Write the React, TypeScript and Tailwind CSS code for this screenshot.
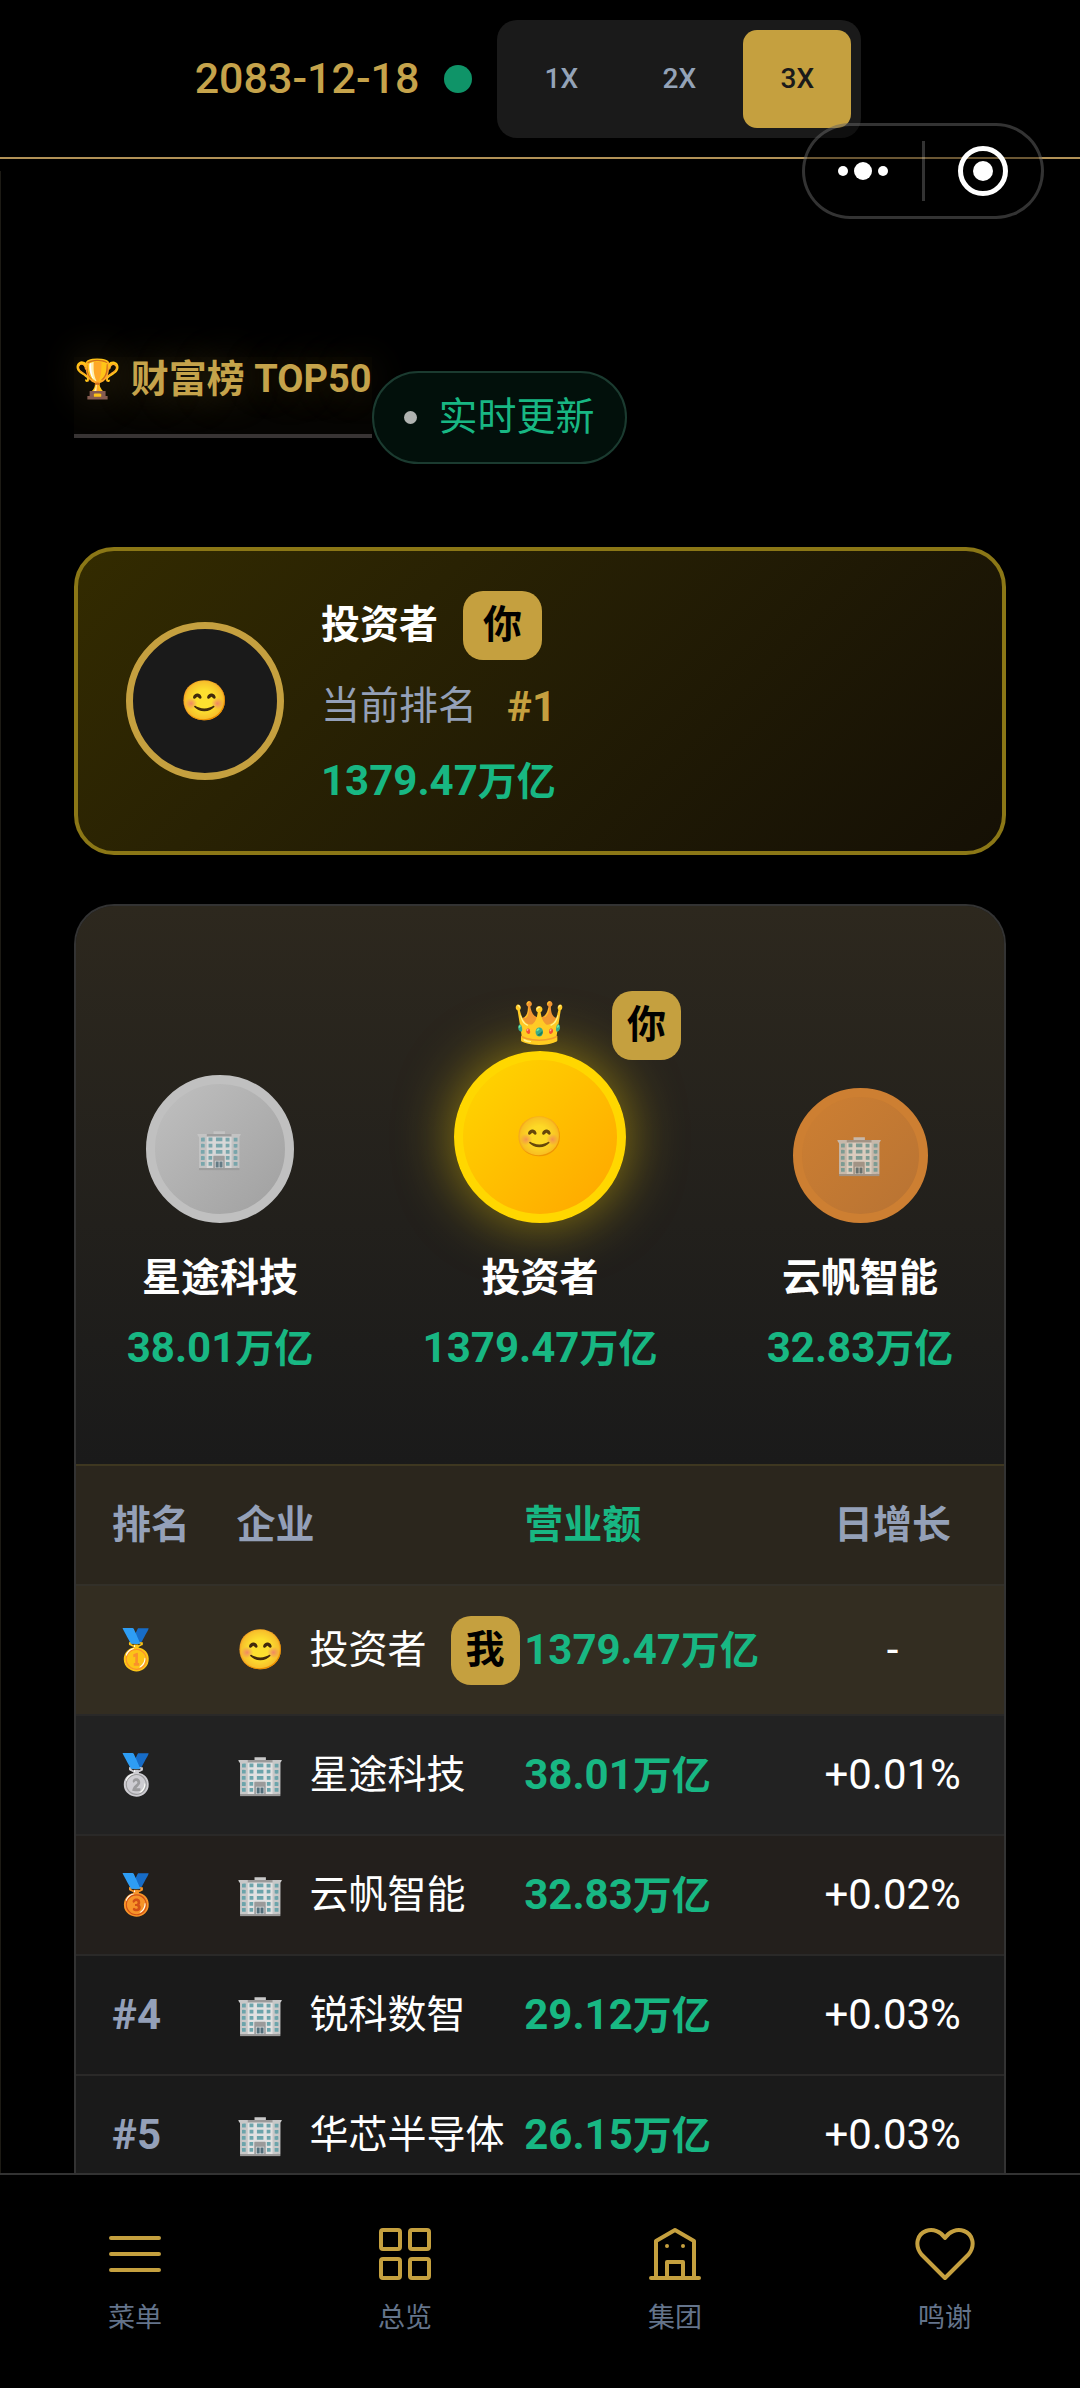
import { useState } from 'react';

interface Amount {
  value: string;
  unit: string;
}

interface Company {
  rank: string;
  icon: string;
  name: string;
  revenue: Amount;
  growth: string;
  isMe?: boolean;
}

interface PodiumPlace {
  icon: string;
  name: string;
  revenue: Amount;
  avatarClass: string;
  isFirst?: boolean;
}

const COMPANIES: Company[] = [
  { rank: '🥇', icon: '😊', name: '投资者', revenue: { value: '1379.47', unit: '万亿' }, growth: '-', isMe: true },
  { rank: '🥈', icon: '🏢', name: '星途科技', revenue: { value: '38.01', unit: '万亿' }, growth: '+0.01%' },
  { rank: '🥉', icon: '🏢', name: '云帆智能', revenue: { value: '32.83', unit: '万亿' }, growth: '+0.02%' },
  { rank: '#4', icon: '🏢', name: '锐科数智', revenue: { value: '29.12', unit: '万亿' }, growth: '+0.03%' },
  { rank: '#5', icon: '🏢', name: '华芯半导体', revenue: { value: '26.15', unit: '万亿' }, growth: '+0.03%' },
];

const ROW_BG = ['bg-[#332d21]', 'bg-[#222222]', 'bg-[#231f1c]', '', ''];

const PODIUM: PodiumPlace[] = [
  {
    icon: '🏢',
    name: '星途科技',
    revenue: { value: '38.01', unit: '万亿' },
    avatarClass: 'size-[148px] border-[#c0c0c0] from-[#c0c0c0] to-[#a0a0a0]',
  },
  {
    icon: '😊',
    name: '投资者',
    revenue: { value: '1379.47', unit: '万亿' },
    avatarClass: 'size-[172px] border-[#ffd700] from-[#ffd700] to-[#ffa500] shadow-[0_0_56px_rgba(255,215,0,0.5)]',
    isFirst: true,
  },
  {
    icon: '🏢',
    name: '云帆智能',
    revenue: { value: '32.83', unit: '万亿' },
    avatarClass: 'size-[135px] border-[#cd7f32] from-[#cd7f32] to-[#b87333]',
  },
];

const SPEEDS = ['1X', '2X', '3X'];

function Money({ amount }: { amount: Amount }) {
  return (
    <span className="font-bold text-[#18b783] whitespace-nowrap">
      <span className="text-[42px]">{amount.value}</span>
      {amount.unit}
    </span>
  );
}

function Tag({ children, wide }: { children: string; wide?: boolean }) {
  return (
    <span
      className={`inline-flex h-[69px] items-center justify-center rounded-[20px] bg-[#c5a03f] font-bold text-black ${
        wide ? 'w-[79px]' : 'w-[69px]'
      }`}
    >
      {children}
    </span>
  );
}

function TopBar() {
  const [speed, setSpeed] = useState('3X');
  return (
    <header className="flex h-[159px] shrink-0 items-center justify-center border-b-2 border-[#b29257] pr-6">
      <time className="text-[43px] font-medium text-[#c5a34b]">2083-12-18</time>
      <span className="mx-[25px] size-7 rounded-full bg-[#0f9468]" />
      <div className="flex gap-[10px] rounded-[20px] bg-[#1a1a1a] p-[10px]">
        {SPEEDS.map(s => (
          <button
            key={s}
            onClick={() => setSpeed(s)}
            className={`h-[98px] w-[108px] rounded-[14px] text-[28px] font-medium ${
              speed === s ? 'bg-[#c5a03f] text-[#1a1a1a]' : 'text-[#94a3b8]'
            }`}
          >
            {s}
          </button>
        ))}
      </div>
    </header>
  );
}

/* Mini program capsule, floats over the header */
function Capsule() {
  return (
    <div className="absolute top-[123px] right-9 z-20 flex h-24 w-[242px] items-center rounded-full border-[3px] border-white/20 bg-black/40">
      <button aria-label="更多" className="flex flex-1 items-center justify-center">
        <svg width="52" height="20" viewBox="0 0 52 20" fill="#fff">
          <circle cx="6" cy="10" r="5" />
          <circle cx="26" cy="10" r="9" />
          <circle cx="46" cy="10" r="5" />
        </svg>
      </button>
      <span className="h-[60px] w-[3px] bg-white/20" />
      <button aria-label="关闭" className="flex flex-1 items-center justify-center">
        <svg width="52" height="52" viewBox="0 0 52 52">
          <circle cx="26" cy="26" r="22.5" fill="none" stroke="#fff" strokeWidth="5" />
          <circle cx="26" cy="26" r="10" fill="#fff" />
        </svg>
      </button>
    </div>
  );
}

function MyRankCard() {
  return (
    <section className="mt-[83px] flex h-[308px] items-center rounded-[40px] border-4 border-[#8b7716] bg-linear-135 from-[#332b00] to-[#151005] px-12">
      <div className="flex size-[158px] shrink-0 items-center justify-center rounded-full border-[7px] border-[#c5a03f] bg-[#1a1a1a]">
        😊
      </div>
      <div className="ml-[37px] flex flex-col pt-[6px]">
        <div className="flex items-center gap-[25px]">
          <span className="font-bold">投资者</span>
          <Tag wide>你</Tag>
        </div>
        <div className="mt-[10px] flex h-[74px] items-center gap-[30px] text-[#94a0b8]">
          当前排名
          <span className="text-[42px] font-bold text-[#c5a03f]">#1</span>
        </div>
        <div className="flex h-[74px] items-center">
          <Money amount={{ value: '1379.47', unit: '万亿' }} />
        </div>
      </div>
    </section>
  );
}

function Podium() {
  return (
    <div className="grid h-[558px] grid-cols-3 items-end gap-16 bg-linear-to-b from-[#2d281e] to-[#1a1a1a] px-4 pb-[81px]">
      {PODIUM.map(p => (
        <div key={p.name} className="relative flex flex-col items-center">
          {p.isFirst && (
            <>
              <span className="flex h-[56px] items-center text-[42px]">👑</span>
              <span className="absolute -top-1 left-[200px]">
                <Tag>你</Tag>
              </span>
            </>
          )}
          <div className={`flex items-center justify-center rounded-full border-[9px] bg-linear-135 ${p.avatarClass}`}>
            <span className="opacity-80">{p.icon}</span>
          </div>
          <span className="mt-5 flex h-[70px] items-center font-bold">{p.name}</span>
          <span className="flex h-[70px] items-center">
            <Money amount={p.revenue} />
          </span>
        </div>
      ))}
    </div>
  );
}

function RankTable() {
  return (
    <table className="w-full table-fixed border-collapse">
      <colgroup>
        <col className="w-[17.3%]" />
        <col className="w-[31%]" />
        <col className="w-[27.7%]" />
        <col className="w-[24%]" />
      </colgroup>
      <thead>
        <tr className="h-[120px] border-t-2 border-b-2 border-t-[#3e3720] border-b-[#333029] bg-[#2b261d] text-left text-[#94a0b8]">
          <th className="p-0 pl-9">排名</th>
          <th className="p-0">企业</th>
          <th className="p-0 text-[#18b783]">营业额</th>
          <th className="p-0 text-center">日增长</th>
        </tr>
      </thead>
      <tbody>
        {COMPANIES.map((c, i) => (
          <tr key={c.name} className={`border-b-2 border-[#2a2928] ${c.isMe ? 'h-[130px]' : 'h-[120px]'} ${ROW_BG[i]}`}>
            <td className={`p-0 pl-9 ${i > 2 ? 'text-[42px] font-bold text-[#94a0b8]' : ''}`}>{c.rank}</td>
            <td className="p-0">
              <div className="flex items-center whitespace-nowrap">
                <span className="w-[73px]">{c.icon}</span>
                {c.name}
                {c.isMe && (
                  <span className="ml-6">
                    <Tag>我</Tag>
                  </span>
                )}
              </div>
            </td>
            <td className="p-0">
              <Money amount={c.revenue} />
            </td>
            <td className="p-0 text-center text-[42px]">{c.growth}</td>
          </tr>
        ))}
      </tbody>
    </table>
  );
}

function BottomNav() {
  const stroke = {
    width: 60,
    height: 60,
    viewBox: '0 0 60 60',
    fill: 'none',
    stroke: '#c5a03f',
    strokeWidth: 4,
    strokeLinecap: 'round' as const,
    strokeLinejoin: 'round' as const,
  };
  const items = [
    {
      label: '菜单',
      icon: (
        <svg {...stroke}>
          <path d="M6 14h48M6 30h48M6 46h48" />
        </svg>
      ),
    },
    {
      label: '总览',
      icon: (
        <svg {...stroke}>
          <rect x="6" y="6" width="19" height="19" rx="2" />
          <rect x="35" y="6" width="19" height="19" rx="2" />
          <rect x="6" y="35" width="19" height="19" rx="2" />
          <rect x="35" y="35" width="19" height="19" rx="2" />
        </svg>
      ),
    },
    {
      label: '集团',
      icon: (
        <svg {...stroke}>
          <path d="M6 54h48M11 54V17L30 6l19 11v37M22 54V38h16v16" />
          <path d="M22 22v0.1M38 22v0.1" />
        </svg>
      ),
    },
    {
      label: '鸣谢',
      icon: (
        <svg {...stroke}>
          <path d="M30 54 6.5 30.5C-1 21 2.500 10 11 7c7-2.500 15 .5 19 7 4-6.500 12-9.500 19-7 8.500 3 12 14 4.500 23.500Z" />
        </svg>
      ),
    },
  ];
  return (
    <nav className="grid h-[215px] shrink-0 grid-cols-4 border-t-2 border-[#333333] bg-black">
      {items.map(item => (
        <a key={item.label} href="#" className="flex flex-col items-center pt-[49px] text-[27px] text-[#64748b]">
          {item.icon}
          <span className="mt-[14px] leading-10">{item.label}</span>
        </a>
      ))}
    </nav>
  );
}

export default function App() {
  return (
    <div className="relative flex h-screen flex-col overflow-hidden bg-black font-[Roboto,'Noto_Sans_CJK_SC','Noto_Color_Emoji',sans-serif] text-[39px] leading-none text-white">
      <TopBar />
      <Capsule />
      <main className="mt-3 min-h-0 flex-1 overflow-hidden border-l border-[#1c1a14] pr-[74px] pl-[73px]">
        <div className="flex items-start pt-[186px]">
          <h1 className="h-[81px] border-b-4 border-[#383434] bg-[#050402] pt-[2px] text-[38px] leading-10 font-bold whitespace-nowrap text-[#c5a34b] [text-shadow:0_0_40px_rgba(197,160,63,0.3)]">
            🏆 财富榜 TOP50
          </h1>
          <div className="mt-[14px] flex h-[93px] items-center gap-[22px] rounded-full border-2 border-[#1b3b30] bg-[#02100b] px-[30px] text-[#18b783]">
            <span className="size-[13px] rounded-full bg-[#b0b3b1]" />
            实时更新
          </div>
        </div>
        <MyRankCard />
        <section className="mt-[49px] overflow-hidden rounded-t-[40px] border-2 border-b-0 border-[#333333] bg-[#1a1a1a]">
          <Podium />
          <RankTable />
        </section>
      </main>
      <BottomNav />
    </div>
  );
}
